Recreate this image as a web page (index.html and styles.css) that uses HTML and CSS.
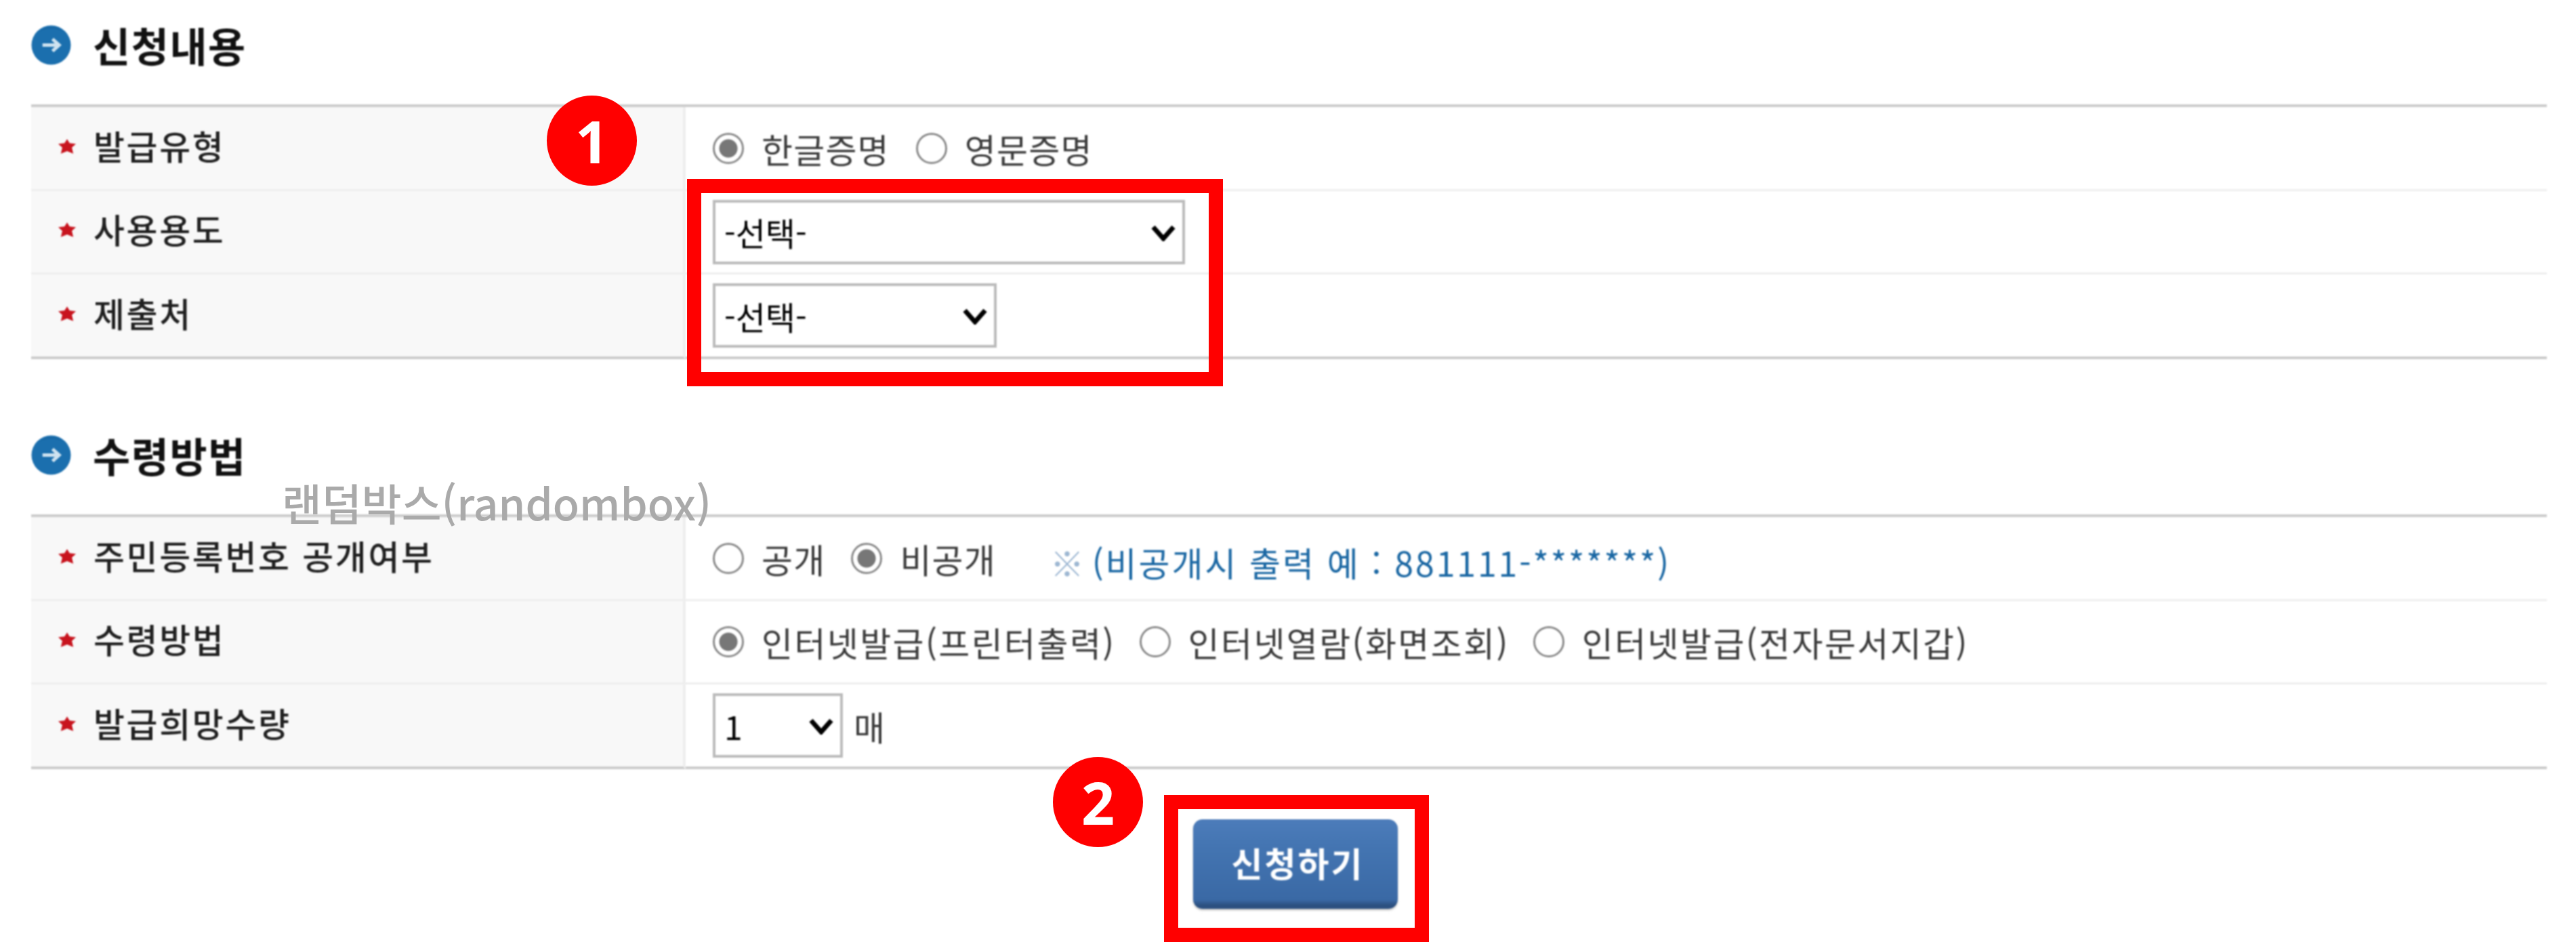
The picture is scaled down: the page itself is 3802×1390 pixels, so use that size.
FILE: index.html
```html
<!DOCTYPE html>
<html lang="ko">
<head>
<meta charset="UTF-8" />
<title>신청내용</title>
<link rel="stylesheet" href="styles.css">
</head>
<body>

<div class="page">

  <div class="capture">

    <h2 class="title">
      <svg class="title-icon" viewBox="0 0 60 60"><circle cx="30" cy="30" r="29.5" fill="#1b6fae"/><path d="M12 10a29 29 0 0 1 36 0a34 34 0 0 0-36 0z" fill="#125a92"/><path d="M17 30h24M32 21l10 9-10 9" fill="none" stroke="#cfe3f0" stroke-width="5"/></svg>
      신청내용
    </h2>

    <table class="form">
      <tr>
        <th><svg class="star" viewBox="0 0 24 20"><path d="M12 0l3.500 5.500 8.500 1-5.500 5 2 8.500-8.500-3.500-8.500 3.500 2-8.500-5.500-5 8.500-1z"/></svg>발급유형</th>
        <td>
          <div class="opts">
            <label><input type="radio" name="kind" checked> 한글증명</label>
            <label><input type="radio" name="kind"> 영문증명</label>
          </div>
        </td>
      </tr>
      <tr>
        <th><svg class="star" viewBox="0 0 24 20"><path d="M12 0l3.500 5.500 8.500 1-5.500 5 2 8.500-8.500-3.500-8.500 3.500 2-8.500-5.500-5 8.500-1z"/></svg>사용용도</th>
        <td>
          <div class="select select-wide">
            <select><option>-선택-</option></select>
            <svg viewBox="0 0 36 24"><path d="M3 3l15 17L33 3" fill="none" stroke="#000" stroke-width="7"/></svg>
          </div>
        </td>
      </tr>
      <tr>
        <th><svg class="star" viewBox="0 0 24 20"><path d="M12 0l3.500 5.500 8.500 1-5.500 5 2 8.500-8.500-3.500-8.500 3.500 2-8.500-5.500-5 8.500-1z"/></svg>제출처</th>
        <td>
          <div class="select select-mid">
            <select><option>-선택-</option></select>
            <svg viewBox="0 0 36 24"><path d="M3 3l15 17L33 3" fill="none" stroke="#000" stroke-width="7"/></svg>
          </div>
        </td>
      </tr>
    </table>

    <h2 class="title title-second">
      <svg class="title-icon" viewBox="0 0 60 60"><circle cx="30" cy="30" r="29.5" fill="#1b6fae"/><path d="M12 10a29 29 0 0 1 36 0a34 34 0 0 0-36 0z" fill="#125a92"/><path d="M17 30h24M32 21l10 9-10 9" fill="none" stroke="#cfe3f0" stroke-width="5"/></svg>
      수령방법
    </h2>

    <table class="form">
      <tr>
        <th><svg class="star" viewBox="0 0 24 20"><path d="M12 0l3.500 5.500 8.500 1-5.500 5 2 8.500-8.500-3.500-8.500 3.500 2-8.500-5.500-5 8.500-1z"/></svg>주민등록번호 공개여부</th>
        <td>
          <div class="opts opts-open">
            <label><input type="radio" name="open"> 공개</label>
            <label><input type="radio" name="open" checked> 비공개</label>
            <span class="note"><i>※</i> (비공개시 출력 예 : 881111-*******)</span>
          </div>
        </td>
      </tr>
      <tr>
        <th><svg class="star" viewBox="0 0 24 20"><path d="M12 0l3.500 5.500 8.500 1-5.500 5 2 8.500-8.500-3.500-8.500 3.500 2-8.500-5.500-5 8.500-1z"/></svg>수령방법</th>
        <td>
          <div class="opts opts-recv">
            <label><input type="radio" name="recv" checked> 인터넷발급(프린터출력)</label>
            <label><input type="radio" name="recv"> 인터넷열람(화면조회)</label>
            <label><input type="radio" name="recv"> 인터넷발급(전자문서지갑)</label>
          </div>
        </td>
      </tr>
      <tr>
        <th><svg class="star" viewBox="0 0 24 20"><path d="M12 0l3.500 5.500 8.500 1-5.500 5 2 8.500-8.500-3.500-8.500 3.500 2-8.500-5.500-5 8.500-1z"/></svg>발급희망수량</th>
        <td>
          <div class="opts qty">
            <div class="select select-small">
              <select><option>1</option></select>
              <svg viewBox="0 0 36 24"><path d="M3 3l15 17L33 3" fill="none" stroke="#000" stroke-width="7"/></svg>
            </div>
            <span>매</span>
          </div>
        </td>
      </tr>
    </table>

    <div class="actions">
      <button type="button">신청하기</button>
    </div>

  </div>

  <!-- annotations drawn over the captured form -->
  <div class="watermark">랜덤박스(randombox)</div>
  <div class="badge badge-one">1</div>
  <div class="badge badge-two">2</div>
  <div class="mark mark-one"></div>
  <div class="mark mark-two"></div>

</div>

</body>
</html>
```

FILE: styles.css
```css
* {
  box-sizing: border-box;
}
body {
  margin: 0;
  background: #fff;
  font-family: "Noto Sans CJK KR", "Noto Sans", sans-serif;
  color: #3a3a3a;
}
.page {
  position: relative;
  height: 1390px;
  overflow: hidden;
}
.capture {
  padding: 37px 43px 0 46px;
  filter: blur(0.8px);
}
.title {
  display: flex;
  align-items: center;
  gap: 32px;
  height: 59px;
  margin: 0;
  padding-bottom: 3px;
  font-size: 60px;
  font-weight: 700;
  letter-spacing: 1.5px;
  color: #111;
}
.title-icon {
  width: 59px;
  height: 59px;
  margin-top: 3px;
}
.title-second {
  margin-top: 112px;
}
.form {
  width: 100%;
  margin-top: 58px;
  border-collapse: separate;
  border-spacing: 0;
  border-top: 4px solid #ccc;
}
.form th,
.form td {
  height: 123px;
  padding: 0;
  border-bottom: 3px solid #eee;
}
.form tr:first-child th,
.form tr:first-child td {
  height: 124px;
}
.form tr:last-child th,
.form tr:last-child td {
  height: 125px;
  border-bottom: 4px solid #ccc;
}
.form th {
  width: 966px;
  padding: 0 0 10px 40px;
  background: #f8f8f8;
  border-right: 4px solid #eee;
  text-align: left;
  font-size: 50px;
  font-weight: 500;
  letter-spacing: 2.6px;
  color: #1f1f1f;
}
.form td {
  padding-left: 40px;
  font-size: 50px;
  letter-spacing: 1.2px;
}
.star {
  width: 26px;
  height: 22px;
  margin-right: 26px;
  vertical-align: 9px;
  fill: #c8141e;
}
.opts {
  display: flex;
  align-items: center;
  gap: 39px;
}
.opts label {
  display: flex;
  align-items: center;
  gap: 26px;
}
.opts-open {
  gap: 38px;
}
.opts-recv {
  gap: 35px;
  letter-spacing: 2.4px;
}
input[type="radio"] {
  appearance: none;
  width: 46px;
  height: 46px;
  margin: 0;
  border: 3px solid #8a8a8a;
  border-radius: 50%;
  background: #fff;
}
input[type="radio"]:checked {
  background: radial-gradient(circle, #777 13px, #fff 14px);
}
.note {
  margin: 10px 0 0 42px;
  letter-spacing: 2.9px;
  color: #1a67a3;
}
.note i {
  margin-right: -8px;
  font-style: normal;
  color: #9db7d2;
}
.select {
  position: relative;
  height: 95px;
}
.select select {
  appearance: none;
  display: block;
  width: 100%;
  height: 100%;
  padding: 0 0 0 13px;
  border: 4px solid #bbb;
  border-radius: 0;
  background: #fff;
  font: inherit;
  font-size: 48px;
  color: #000;
}
.select svg {
  position: absolute;
  top: 37px;
  right: 14px;
  width: 36px;
  height: 24px;
  pointer-events: none;
}
.select-wide {
  width: 697px;
}
.select-mid {
  width: 419px;
}
.select-small {
  width: 192px;
}
.qty {
  gap: 16px;
}
.actions {
  display: flex;
  justify-content: center;
  margin-top: 74px;
  padding-left: 18px;
}
.actions button {
  width: 302px;
  height: 132px;
  padding: 0 0 7px 8px;
  border: none;
  border-radius: 14px;
  background: linear-gradient(#4c7cba 0%, #4475b2 30%, #3a69a5 90%, #2c5080 96%);
  box-shadow: 0 2px 3px #bbb;
  font: inherit;
  font-size: 50px;
  font-weight: 700;
  letter-spacing: 3px;
  color: #fff;
}
.watermark {
  position: absolute;
  left: 416px;
  top: 694px;
  font-size: 64px;
  font-weight: 500;
  color: #aaa;
  white-space: nowrap;
}
.badge {
  position: absolute;
  width: 133px;
  height: 133px;
  border-radius: 50%;
  background: #f00;
  color: #fff;
  font-family: "Noto Sans", sans-serif;
  font-size: 86px;
  font-weight: 700;
  line-height: 133px;
  text-align: center;
}
.badge-one {
  left: 807px;
  top: 141px;
}
.badge-two {
  left: 1554px;
  top: 1117px;
}
.mark {
  position: absolute;
  border: 21px solid #f00;
}
.mark-one {
  left: 1014px;
  top: 264px;
  width: 791px;
  height: 306px;
}
.mark-two {
  left: 1718px;
  top: 1173px;
  width: 391px;
  height: 217px;
}
```
